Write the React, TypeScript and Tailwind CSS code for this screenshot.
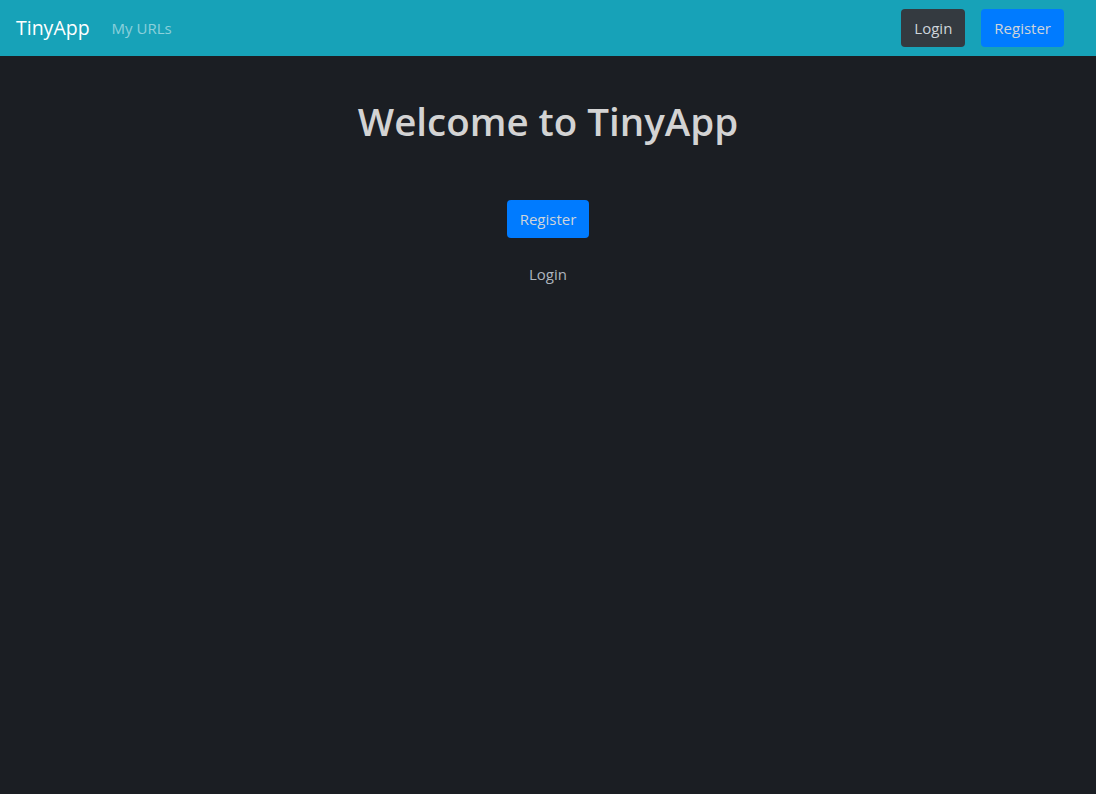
export default function App() {
  return (
    <div className="min-h-[794px] bg-[#1b1e23] font-['Segoe_UI','Open_Sans',sans-serif] text-[#ced4da]">
      <nav className="flex h-14 items-center bg-[#17a2b8] pl-4 pr-8">
        <a className="mr-[22px] text-[19.5px] leading-none text-white">TinyApp</a>
        <a className="text-[15px] text-white/50">My URLs</a>
        <div className="ml-auto flex gap-4">
          <button className="h-[38px] rounded bg-[#343a40] px-[13px] text-[15px] text-[#ced4da]">Login</button>
          <button className="h-[38px] rounded bg-[#007bff] px-[13px] text-[15px] text-[#ced4da]">Register</button>
        </div>
      </nav>
      <main className="flex flex-col items-center">
        <h1 className="mt-[41px] text-[38.5px] font-semibold leading-[48px] text-[#d3d3d3]">Welcome to TinyApp</h1>
        <button className="mt-[55px] h-[38px] rounded bg-[#007bff] px-[13px] text-[15px] text-[#ced4da]">Register</button>
        <a className="mt-[25px] text-[15px] text-[#adb5bd]">Login</a>
      </main>
    </div>
  );
}
